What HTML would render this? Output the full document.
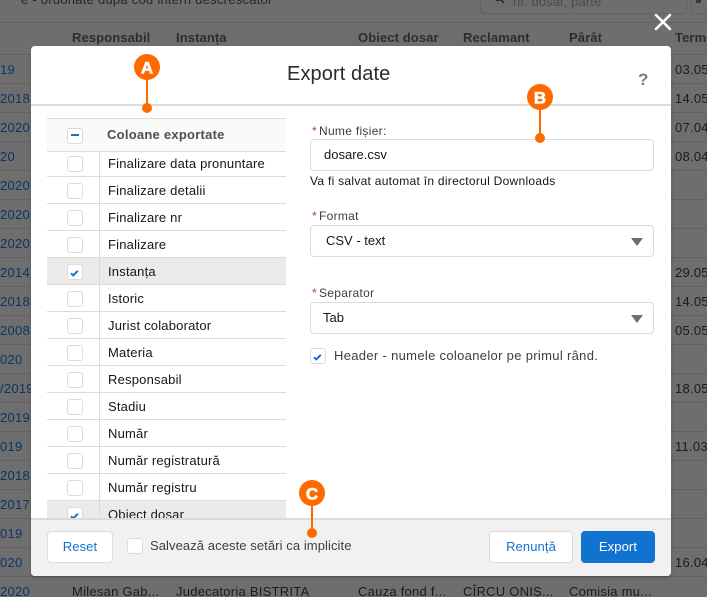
<!DOCTYPE html>
<html lang="ro">
<head>
<meta charset="utf-8">
<title>Export date</title>
<style>
html,body{margin:0;padding:0;overflow:hidden}
body{width:707px;height:597px;position:relative;background:#6e6e6e;font-family:"Liberation Sans",sans-serif;font-size:13px;color:#16161a}
#w{position:absolute;left:0;top:0;width:707px;height:597px;overflow:hidden;background:#6e6e6e}
.a{position:absolute;white-space:nowrap}
.bl{position:absolute;left:0;width:707px;height:1px;background:#626262}
.bt{position:absolute;white-space:nowrap;font-size:13px;color:#1b1b1b;letter-spacing:.25px}
.lk{color:#0b3565}
.hd{font-weight:bold;color:#2d2d2d;letter-spacing:.1px}
#modal{position:absolute;left:31px;top:46px;width:640px;height:530px;background:#fff;border-radius:4px;overflow:hidden}
#sh{position:absolute;left:31px;top:46px;width:640px;height:530px;border-radius:4px;box-shadow:0 2px 3px rgba(0,0,0,.18)}
.ln{position:absolute;background:#dddbda}
.row{position:absolute;left:16px;width:239px;height:26px;border-bottom:1px solid #dddbda}
.row.s{background:#ecebea}
.row span{position:absolute;left:61px;top:6px;font-size:13px;letter-spacing:.2px;color:#16161a;white-space:nowrap}
.cb{position:absolute;width:14px;height:14px;background:#fff;border:1px solid #dddbda;border-radius:3px}
.row .cb{left:20px;top:6px}
.cb svg{position:absolute;left:0;top:0}
.lab{position:absolute;font-size:12px;letter-spacing:.3px;color:#3e3e3c;white-space:nowrap}
.lab b{color:#c23934;font-weight:normal;margin-right:2px}
.inp{position:absolute;left:279px;width:342px;height:30px;background:#fff;border:1px solid #dddbda;border-radius:4px}
.inp span{position:absolute;top:7px;font-size:13px;letter-spacing:0;color:#16161a;white-space:nowrap}
.arr{position:absolute;right:10px;top:12px;width:0;height:0;border-left:6px solid transparent;border-right:6px solid transparent;border-top:8px solid #706e6b}
.btn{position:absolute;top:485px;height:30px;border:1px solid #dddbda;border-radius:4px;background:#fff;color:#1272cf;font-size:13px;text-align:center;line-height:30px;letter-spacing:.1px}
.pin{position:absolute}
.pin text{font-family:"Liberation Sans",sans-serif;font-weight:bold;font-size:17px;fill:#fff;stroke:#fff;stroke-width:.6px}
</style>
</head>
<body>
<div id="w">
<!-- background page -->
<div class="a" style="left:21px;top:-8px;color:#272727;font-size:13px;letter-spacing:.25px">e - ordonate după cod intern descrescător</div>
<div class="a" style="left:480px;top:-16px;width:205px;height:28px;border:1px solid #626262;border-radius:4px"></div>
<svg class="pin" style="left:493px;top:-8px" width="12" height="12" viewBox="0 0 12 12"><circle cx="5" cy="5" r="3.5" fill="none" stroke="#2d2d2d" stroke-width="1.6"/><path d="M8 8L11 11" stroke="#2d2d2d" stroke-width="1.8"/></svg>
<div class="a" style="left:513px;top:-6px;color:#4a4a4a;font-size:13px;letter-spacing:.1px">nr. dosar, parte</div>
<div class="a" style="left:691px;top:-16px;width:30px;height:28px;border:1px solid #626262;border-radius:4px"></div>
<div class="a" style="left:696px;top:0;width:5px;height:3px;background:#3a3a3a"></div>
<div class="bl" style="top:22px"></div><div class="bl" style="top:54px"></div><div class="bl" style="top:83px"></div><div class="bl" style="top:112px"></div><div class="bl" style="top:141px"></div><div class="bl" style="top:170px"></div><div class="bl" style="top:199px"></div><div class="bl" style="top:228px"></div><div class="bl" style="top:257px"></div><div class="bl" style="top:286px"></div><div class="bl" style="top:315px"></div><div class="bl" style="top:344px"></div><div class="bl" style="top:373px"></div><div class="bl" style="top:402px"></div><div class="bl" style="top:431px"></div><div class="bl" style="top:460px"></div><div class="bl" style="top:489px"></div><div class="bl" style="top:518px"></div><div class="bl" style="top:547px"></div><div class="bl" style="top:576px"></div>
<div class="bt hd" style="left:72px;top:30px">Responsabil</div>
<div class="bt hd" style="left:176px;top:30px">Instanța</div>
<div class="bt hd" style="left:358px;top:30px">Obiect dosar</div>
<div class="bt hd" style="left:463px;top:30px">Reclamant</div>
<div class="bt hd" style="left:569px;top:30px">Pârât</div>
<div class="bt hd" style="left:675px;top:30px">Termen</div>
<div class="bt lk" style="left:0;top:62px">19</div>
<div class="bt lk" style="left:0;top:91px">2018</div>
<div class="bt lk" style="left:0;top:120px">2020</div>
<div class="bt lk" style="left:0;top:149px">20</div>
<div class="bt lk" style="left:0;top:178px">2020</div>
<div class="bt lk" style="left:0;top:207px">2020</div>
<div class="bt lk" style="left:0;top:236px">2020</div>
<div class="bt lk" style="left:0;top:265px">2014</div>
<div class="bt lk" style="left:0;top:294px">2018</div>
<div class="bt lk" style="left:0;top:323px">2008</div>
<div class="bt lk" style="left:0;top:352px">020</div>
<div class="bt lk" style="left:0;top:381px">/2019</div>
<div class="bt lk" style="left:0;top:410px">2019</div>
<div class="bt lk" style="left:0;top:439px">019</div>
<div class="bt lk" style="left:0;top:468px">2018</div>
<div class="bt lk" style="left:0;top:497px">2017</div>
<div class="bt lk" style="left:0;top:526px">019</div>
<div class="bt lk" style="left:0;top:555px">020</div>
<div class="bt lk" style="left:0;top:584px">2020</div>
<div class="bt" style="left:675px;top:62px">03.05.2021</div>
<div class="bt" style="left:675px;top:91px">14.05.2021</div>
<div class="bt" style="left:675px;top:120px">07.04.2021</div>
<div class="bt" style="left:675px;top:149px">08.04.2021</div>
<div class="bt" style="left:675px;top:265px">29.05.2021</div>
<div class="bt" style="left:675px;top:294px">14.05.2021</div>
<div class="bt" style="left:675px;top:323px">05.05.2021</div>
<div class="bt" style="left:675px;top:381px">18.05.2021</div>
<div class="bt" style="left:675px;top:439px">11.03.2021</div>
<div class="bt" style="left:675px;top:555px">16.04.2021</div>
<div class="bt" style="left:72px;top:584px">Milesan Gab...</div>
<div class="bt" style="left:176px;top:584px">Judecatoria BISTRITA</div>
<div class="bt" style="left:358px;top:584px">Cauza fond f...</div>
<div class="bt" style="left:463px;top:584px">CÎRCU ONIȘ...</div>
<div class="bt" style="left:569px;top:584px">Comisia mu...</div>

<svg class="pin" style="left:652px;top:11px" width="22" height="22" viewBox="0 0 22 22"><path d="M4 4L18 18M18 4L4 18" stroke="#fff" stroke-width="2.6" stroke-linecap="round"/></svg>

<!-- modal -->
<div id="sh"></div>
<div id="modal">
  <div class="a" style="left:256px;top:17px;font-size:20px;letter-spacing:.1px;color:#2b2b2b">Export date</div>
  <div class="a" style="left:607px;top:24px;font-size:17px;font-weight:bold;color:#7d7b78">?</div>
  <div class="ln" style="left:0;top:58px;width:640px;height:2px"></div>

  <div class="a" style="left:16px;top:72px;width:239px;height:32px;background:#fafaf9;border-top:1px solid #dddbda;border-bottom:1px solid #dddbda"></div>
  <div class="cb" style="left:36px;top:82px"><svg width="14" height="14"><rect x="3" y="5" width="8" height="2" fill="#1272cf"/></svg></div>
  <div class="a" style="left:76px;top:81px;font-size:13px;font-weight:bold;letter-spacing:.25px;color:#514f4d">Coloane exportate</div>

  <div class="row" style="top:106px;height:24px"><span style="top:4px">Finalizare data pronuntare</span><div class="cb" style="top:4px"></div></div>
  <div class="row" style="top:131px"><span>Finalizare detalii</span><div class="cb"></div></div>
  <div class="row" style="top:158px"><span>Finalizare nr</span><div class="cb"></div></div>
  <div class="row" style="top:185px"><span>Finalizare</span><div class="cb"></div></div>
  <div class="row s" style="top:212px"><span>Instanța</span><div class="cb"><svg width="14" height="14"><path d="M3 8.4L5.3 10.4L9.8 5.8" fill="none" stroke="#1272cf" stroke-width="2"/></svg></div></div>
  <div class="row" style="top:239px"><span>Istoric</span><div class="cb"></div></div>
  <div class="row" style="top:266px"><span>Jurist colaborator</span><div class="cb"></div></div>
  <div class="row" style="top:293px"><span>Materia</span><div class="cb"></div></div>
  <div class="row" style="top:320px"><span>Responsabil</span><div class="cb"></div></div>
  <div class="row" style="top:347px"><span>Stadiu</span><div class="cb"></div></div>
  <div class="row" style="top:374px"><span>Număr</span><div class="cb"></div></div>
  <div class="row" style="top:401px"><span>Număr registratură</span><div class="cb"></div></div>
  <div class="row" style="top:428px"><span>Număr registru</span><div class="cb"></div></div>
  <div class="row s" style="top:455px"><span>Obiect dosar</span><div class="cb"><svg width="14" height="14"><path d="M3 8.4L5.3 10.4L9.8 5.8" fill="none" stroke="#1272cf" stroke-width="2"/></svg></div></div>
  <div class="ln" style="left:68px;top:105px;width:1px;height:368px"></div>

  <div class="lab" style="left:281px;top:78px"><b>*</b>Nume fișier:</div>
  <div class="inp" style="top:93px"><span style="left:13px">dosare.csv</span></div>
  <div class="a" style="left:279px;top:128px;font-size:12px;letter-spacing:.28px;color:#16161a">Va fi salvat automat în directorul Downloads</div>

  <div class="lab" style="left:281px;top:163px"><b>*</b>Format</div>
  <div class="inp" style="top:179px"><span style="left:15px">CSV - text</span><div class="arr"></div></div>

  <div class="lab" style="left:281px;top:240px"><b>*</b>Separator</div>
  <div class="inp" style="top:256px"><span style="left:12px">Tab</span><div class="arr"></div></div>

  <div class="cb" style="left:279px;top:302px"><svg width="14" height="14"><path d="M3 8.4L5.3 10.4L9.8 5.8" fill="none" stroke="#1272cf" stroke-width="2"/></svg></div>
  <div class="a" style="left:303px;top:302px;font-size:13px;letter-spacing:.32px;color:#3e3e3c">Header - numele coloanelor pe primul rând.</div>

  <div class="a" style="left:0;top:472px;width:640px;height:58px;background:#f1f1f1;border-top:2px solid #dddbda;box-sizing:border-box"></div>
  <div class="btn" style="left:16px;width:64px">Reset</div>
  <div class="cb" style="left:96px;top:492px"></div>
  <div class="a" style="left:119px;top:492px;font-size:13px;letter-spacing:.08px;color:#3e3e3c">Salvează aceste setări ca implicite</div>
  <div class="btn" style="left:458px;width:82px">Renunță</div>
  <div class="btn" style="left:550px;width:72px;background:#1272cf;border-color:#1272cf;color:#fff">Export</div>
</div>

<!-- callouts -->
<svg class="pin" style="left:130px;top:50px" width="40" height="70" viewBox="0 0 40 70"><line x1="17" y1="17" x2="17" y2="58" stroke="#fe6a00" stroke-width="2"/><circle cx="17" cy="58" r="5" fill="#fe6a00"/><circle cx="17" cy="17" r="13" fill="#fe6a00"/><text x="17" y="23.5" text-anchor="middle">A</text></svg>
<svg class="pin" style="left:523px;top:80px" width="40" height="70" viewBox="0 0 40 70"><line x1="17" y1="17" x2="17" y2="58" stroke="#fe6a00" stroke-width="2"/><circle cx="17" cy="58" r="5" fill="#fe6a00"/><circle cx="17" cy="17" r="13" fill="#fe6a00"/><text x="17" y="23.5" text-anchor="middle">B</text></svg>
<svg class="pin" style="left:295px;top:476px" width="40" height="70" viewBox="0 0 40 70"><line x1="17" y1="17" x2="17" y2="57" stroke="#fe6a00" stroke-width="2"/><circle cx="17" cy="57" r="5" fill="#fe6a00"/><circle cx="17" cy="17" r="13" fill="#fe6a00"/><text x="17" y="23.5" text-anchor="middle">C</text></svg>
</div>
</body>
</html>
